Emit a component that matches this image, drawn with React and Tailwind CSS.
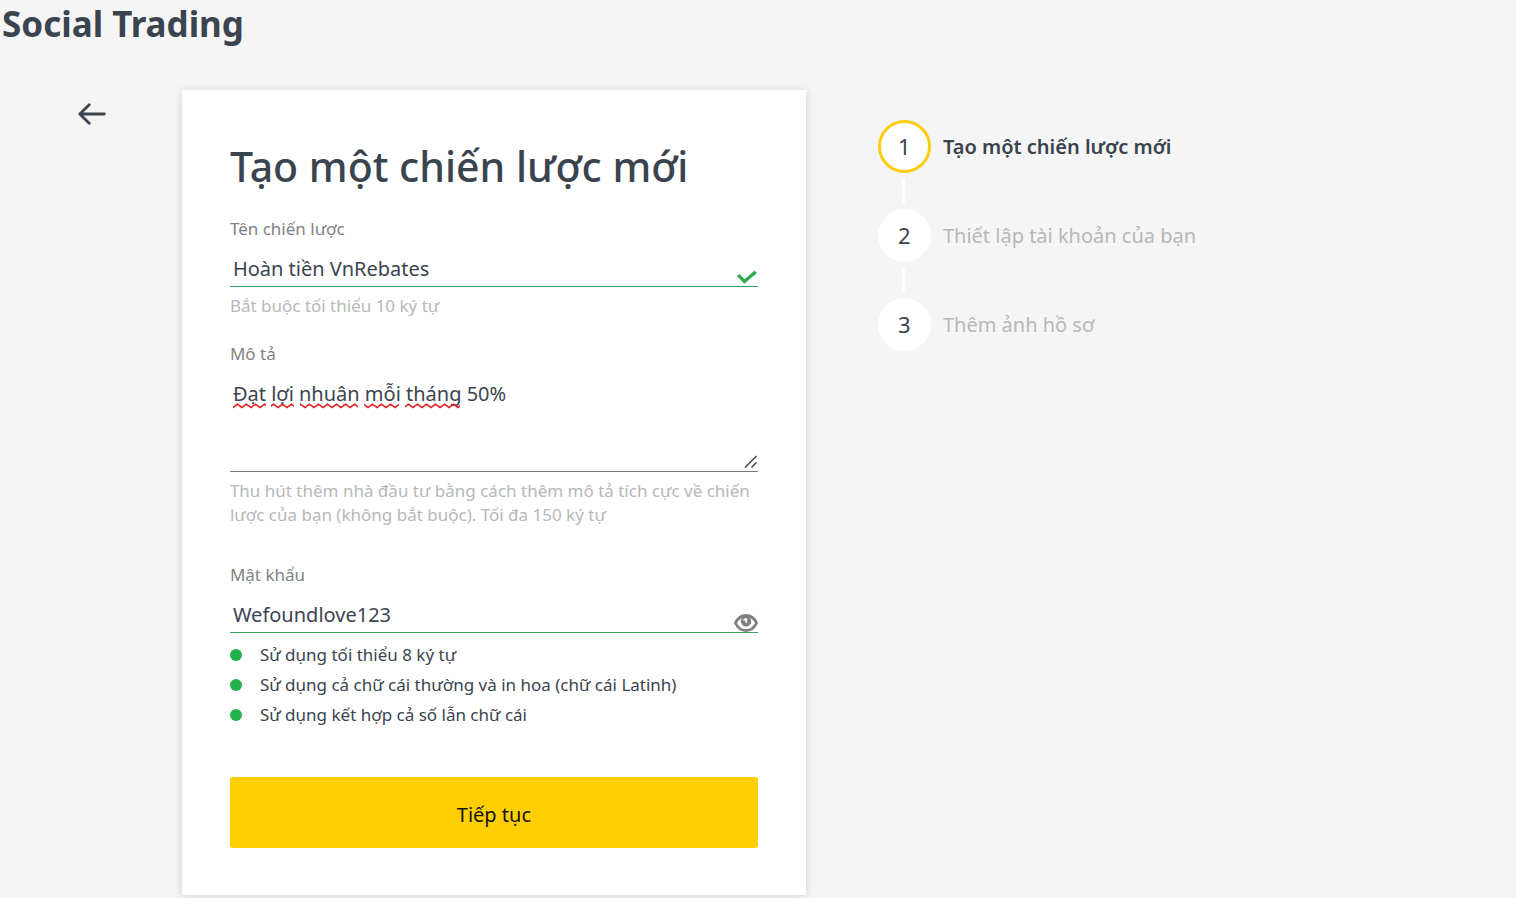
import { useState } from 'react';

const steps = [
  { id: 1, title: 'Tạo một chiến lược mới' },
  { id: 2, title: 'Thiết lập tài khoản của bạn' },
  { id: 3, title: 'Thêm ảnh hồ sơ' },
];

const passwordRules = [
  'Sử dụng tối thiểu 8 ký tự',
  'Sử dụng cả chữ cái thường và in hoa (chữ cái Latinh)',
  'Sử dụng kết hợp cả số lẫn chữ cái',
];

// start and width of each misspelled word
const misspelled = [
  [0, 33],
  [38, 23],
  [67, 58],
  [131, 35],
  [172, 55],
];

const labelClass = 'block text-[17px] leading-[26px] text-[#808285]';
const fieldClass =
  'block w-full pt-3 pb-[2px] pl-[3px] pr-8 text-[20px] leading-[30px] text-[#3a444f] bg-transparent border-b rounded-none outline-none';
const hintClass = 'mt-[7px] text-[17px] leading-6 text-[#b6b8ba]';

const BackIcon = () => (
  <svg width="28" height="24" viewBox="0 0 28 24" fill="none" stroke="currentColor" strokeWidth="2.8" strokeLinecap="round" strokeLinejoin="round">
    <path d="M26.3 12H1.8M11.2 2.8L1.8 12l9.4 9.2" />
  </svg>
);

const CheckIcon = () => (
  <svg width="20" height="14" viewBox="0 0 20 14" fill="none" stroke="#2bac51" strokeWidth="3.2">
    <path d="M1.2 5.2l6.3 6.3L18.8 1.8" />
  </svg>
);

const EyeIcon = () => (
  <svg width="24" height="18" viewBox="0 0 24 18" fill="none">
    <path d="M1.4 9C3.6 4.4 7.5 1.5 12 1.5S20.4 4.4 22.6 9C20.4 13.6 16.5 16.5 12 16.5S3.6 13.6 1.4 9z" stroke="#808080" strokeWidth="2.8" strokeLinejoin="round" />
    <circle cx="12" cy="7.2" r="5.2" fill="#808080" />
    <path d="M9 6.6a2.6 2.6 0 0 1 2.8-2.4h1.4V8.8h-1.8V6.6z" fill="#fff" />
  </svg>
);

const Squiggles = () => (
  <svg className="absolute top-9 left-[3px] pointer-events-none" width="230" height="6" aria-hidden="true">
    <defs>
      <pattern id="wave" width="9" height="6" patternUnits="userSpaceOnUse">
        <path d="M-2 3L0 4.6L4.5 1.2L9 4.6L11 3" fill="none" stroke="#dd1f1f" strokeWidth="1.6" />
      </pattern>
    </defs>
    {misspelled.map(([x, width]) => (
      <rect key={x} x={x} y="0" width={width} height="6" fill="url(#wave)" />
    ))}
  </svg>
);

const App = () => {
  const [name, setName] = useState('Hoàn tiền VnRebates');
  const [description, setDescription] = useState('Đạt lợi nhuân mỗi tháng 50%');
  const [password, setPassword] = useState('Wefoundlove123');
  const [showPassword, setShowPassword] = useState(true);
  const currentStep = 1;

  return (
    <div className="min-h-screen bg-[#f5f5f5] text-[#3a444f] font-['Noto_Sans','Open_Sans',sans-serif]">
      <h1 className="pl-[2px] text-[35px] leading-12 font-bold">Social Trading</h1>

      <div className="mt-[42px] flex items-start">
        <div className="w-[12%] shrink-0 flex justify-center pt-2 pl-[2px]">
          <button type="button" aria-label="Quay lại" className="h-8 px-1 flex items-center">
            <BackIcon />
          </button>
        </div>

        <form
          onSubmit={(e) => e.preventDefault()}
          className="flex-1 max-w-[624px] px-12 pt-12 pb-[47px] bg-white shadow-[0_1px_8px_rgba(0,0,0,0.15)]"
        >
          <h2 className="mb-[22px] text-[41px] leading-14 font-medium whitespace-nowrap">Tạo một chiến lược mới</h2>

          <div>
            <label htmlFor="name" className={labelClass}>Tên chiến lược</label>
            <div className="relative">
              <input
                id="name"
                type="text"
                value={name}
                onChange={(e) => setName(e.target.value)}
                className={`${fieldClass} border-[#38a159]`}
              />
              <span className="absolute right-px bottom-[3px]">
                <CheckIcon />
              </span>
            </div>
            <p className={hintClass}>Bắt buộc tối thiểu 10 ký tự</p>
          </div>

          <div className="mt-[23px]">
            <label htmlFor="description" className={labelClass}>Mô tả</label>
            <div className="relative">
              <textarea
                id="description"
                value={description}
                onChange={(e) => setDescription(e.target.value)}
                maxLength={150}
                spellCheck={false}
                className={`${fieldClass} h-[105px] resize-none border-[#77787b]`}
              />
              <Squiggles />
              <svg className="absolute right-0 bottom-[3px] pointer-events-none" width="14" height="14" viewBox="0 0 14 14" stroke="#4b4b4b" strokeWidth="1.6" aria-hidden="true">
                <path d="M1 12.5L12.5 1M7.5 12.5L12.5 7.5" />
              </svg>
            </div>
            <p className={hintClass}>
              Thu hút thêm nhà đầu tư bằng cách thêm mô tả tích cực về chiến lược của bạn (không bắt buộc). Tối đa 150 ký tự
            </p>
          </div>

          <div className="mt-[35px]">
            <label htmlFor="password" className={labelClass}>Mật khẩu</label>
            <div className="relative">
              <input
                id="password"
                type={showPassword ? 'text' : 'password'}
                value={password}
                onChange={(e) => setPassword(e.target.value)}
                className={`${fieldClass} border-[#38a159]`}
              />
              <button
                type="button"
                aria-label="Hiện mật khẩu"
                onClick={() => setShowPassword(!showPassword)}
                className="absolute right-0 bottom-px"
              >
                <EyeIcon />
              </button>
            </div>
            <ul className="mt-[7px]">
              {passwordRules.map((rule) => (
                <li key={rule} className="flex items-center gap-[18px] text-[17px] leading-[30px]">
                  <span className="size-3 shrink-0 rounded-full bg-[#23b14d]" />
                  {rule}
                </li>
              ))}
            </ul>
          </div>

          <button
            type="submit"
            className="mt-[47px] w-full h-[71px] pt-1 rounded-[3px] bg-[#ffce03] text-[20px] text-[#141414]"
          >
            Tiếp tục
          </button>
        </form>

        <ol className="ml-[72px] mt-[30px]">
          {steps.map((step) => (
            <li key={step.id} className="group">
              <div className="flex items-center gap-3">
                <span
                  className={`size-[53px] shrink-0 flex items-center justify-center rounded-full bg-white text-[22px] ${
                    step.id === currentStep ? 'border-3 border-[#fbcd14]' : ''
                  }`}
                >
                  {step.id}
                </span>
                <span className={`text-[20px] ${step.id === currentStep ? 'font-semibold' : 'text-[#b6b8ba]'}`}>
                  {step.title}
                </span>
              </div>
              <div className="w-[3px] h-6 ml-6 my-[6px] bg-white group-last:hidden" />
            </li>
          ))}
        </ol>
      </div>
    </div>
  );
};

export default App;
